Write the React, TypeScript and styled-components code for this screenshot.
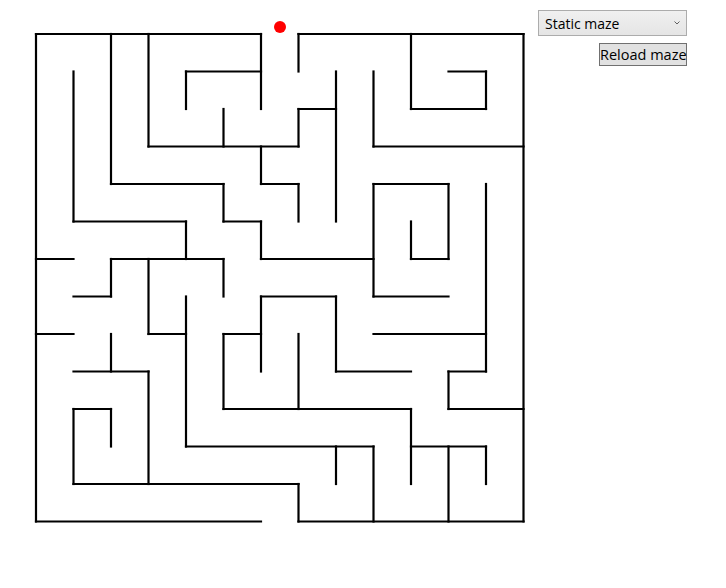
import React from "react"
import styled, { createGlobalStyle } from "styled-components"

const GlobalStyle = createGlobalStyle`
  html, body {
    margin: 0;
    background: #ffffff;
  }
`

const CELL = 37.5
const OX = 28
const OY = 26

// wall segments in grid nodes: [x1, y1, x2, y2]
const walls: number[][] = [
  // border
  [0, 0, 6, 0], [7, 0, 13, 0], [0, 0, 0, 13], [13, 0, 13, 13], [0, 13, 6, 13], [7, 13, 13, 13],
  // inside
  [6, 0, 6, 2], [7, 0, 7, 1],
  [1, 1, 1, 5], [1, 5, 4, 5], [4, 5, 4, 6],
  [2, 0, 2, 4], [2, 4, 5, 4], [5, 4, 5, 5], [5, 5, 6, 5], [6, 5, 6, 6],
  [3, 0, 3, 3], [3, 3, 7, 3], [5, 2, 5, 3],
  [4, 1, 6, 1], [4, 1, 4, 2],
  [6, 3, 6, 4], [6, 4, 7, 4], [7, 4, 7, 5],
  [0, 6, 1, 6], [2, 6, 5, 6], [6, 6, 9, 6],
  [10, 0, 10, 2], [10, 2, 12, 2], [12, 1, 12, 2], [11, 1, 12, 1],
  [8, 1, 8, 5], [7, 2, 8, 2], [7, 2, 7, 3],
  [9, 1, 9, 3], [9, 3, 13, 3],
  [9, 4, 11, 4], [9, 4, 9, 7], [11, 4, 11, 6], [10, 6, 11, 6], [10, 5, 10, 6],
  [12, 4, 12, 9],
  [2, 6, 2, 7], [1, 7, 2, 7],
  [3, 6, 3, 8], [3, 8, 4, 8],
  [5, 6, 5, 7],
  [4, 7, 4, 11], [4, 11, 9, 11],
  [6, 7, 6, 9], [6, 7, 8, 7],
  [5, 8, 6, 8], [5, 8, 5, 10], [5, 10, 10, 10],
  [0, 8, 1, 8],
  [2, 8, 2, 9], [1, 9, 3, 9], [3, 9, 3, 12],
  [1, 10, 2, 10], [2, 10, 2, 11], [1, 10, 1, 12], [1, 12, 7, 12], [7, 12, 7, 13],
  [9, 7, 11, 7],
  [8, 7, 8, 9], [8, 9, 10, 9],
  [9, 8, 12, 8],
  [11, 9, 12, 9], [11, 9, 11, 10], [11, 10, 13, 10],
  [7, 8, 7, 10],
  [10, 10, 10, 12],
  [8, 11, 8, 12],
  [9, 11, 9, 13],
  [10, 11, 12, 11], [11, 11, 11, 13], [12, 11, 12, 12],
]

const Page = styled.div`
  display: flex;
  flex-direction: row;
  align-items: flex-start;
  padding: 8px;
  font-family: "Segoe UI", "Open Sans", "Liberation Sans", sans-serif;
`

const MazeCanvas = styled.svg`
  display: block;
  width: 530px;
  height: 540px;
  flex: none;
`

const Controls = styled.div`
  display: flex;
  flex-direction: column;
  align-items: flex-end;
  gap: 7px;
  padding-top: 2px;
  width: 149px;
`

const SelectWrap = styled.div`
  position: relative;
  width: 149px;
  height: 26px;
`

const MazeSelect = styled.select`
  appearance: none;
  -webkit-appearance: none;
  width: 100%;
  height: 100%;
  margin: 0;
  padding: 1px 20px 0 6px;
  box-sizing: border-box;
  border: 1px solid #acacac;
  border-radius: 0;
  background: linear-gradient(#f0f0f0, #e5e5e5);
  color: #000000;
  font-family: inherit;
  font-size: 14px;
  outline: none;
`

const Chevron = styled.svg`
  position: absolute;
  right: 7px;
  top: 11px;
  width: 6px;
  height: 4px;
  pointer-events: none;
`

const ReloadButton = styled.button`
  width: 88px;
  height: 23px;
  margin: 0;
  padding: 1px 0 0;
  box-sizing: border-box;
  border: 1px solid #707070;
  border-radius: 0;
  background: #e1e1e1;
  color: #000000;
  font-family: inherit;
  font-size: 14.5px;
  line-height: 20px;
  white-space: nowrap;
`

export default function App() {
  return (
    <>
      <GlobalStyle />
      <Page>
        <MazeCanvas viewBox="0 0 530 540">
          {walls.map(([x1, y1, x2, y2], i) => (
            <line
              key={i}
              x1={OX + x1 * CELL}
              y1={OY + y1 * CELL}
              x2={OX + x2 * CELL}
              y2={OY + y2 * CELL}
              stroke="#000000"
              strokeWidth={2.2}
              strokeLinecap="square"
            />
          ))}
          <circle cx={272} cy={19} r={6} fill="#ff0000" />
        </MazeCanvas>
        <Controls>
          <SelectWrap>
            <MazeSelect defaultValue="static">
              <option value="static">Static maze</option>
              <option value="random">Random maze</option>
            </MazeSelect>
            <Chevron viewBox="0 0 6 4">
              <path d="M0.5 0.5 L3 3 L5.5 0.5" fill="none" stroke="#606060" strokeWidth={1} />
            </Chevron>
          </SelectWrap>
          <ReloadButton>Reload maze</ReloadButton>
        </Controls>
      </Page>
    </>
  )
}
